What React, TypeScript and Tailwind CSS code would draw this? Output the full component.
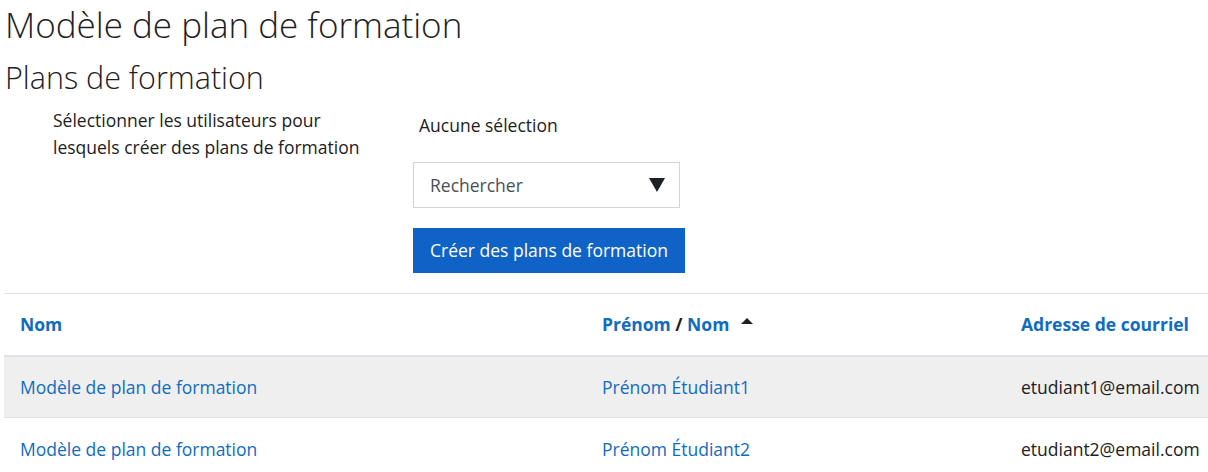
import React from 'react'

const rows = [
  { plan: 'Modèle de plan de formation', user: 'Prénom Étudiant1', email: 'etudiant1@email.com' },
  { plan: 'Modèle de plan de formation', user: 'Prénom Étudiant2', email: 'etudiant2@email.com' },
]

export default function App() {
  return (
    <div className="w-[1208px] h-[472px] overflow-hidden bg-white text-[#1d2125] font-['Open_Sans',sans-serif]">
      <h1 className="pl-[5px] text-[35px] leading-[50px] font-light">Modèle de plan de formation</h1>
      <h2 className="pl-[5px] mt-[7px] text-[30.5px] leading-[40px] font-light">Plans de formation</h2>

      <div className="flex mt-[10px]">
        <div className="w-[413px] pl-[53px]">
          <div className="w-[320px] text-[17.5px] leading-[27px]">
            Sélectionner les utilisateurs pour lesquels créer des plans de formation
          </div>
        </div>
        <div className="flex flex-col">
          <div className="pl-[6px] pt-[5px] text-[17.5px] leading-[27px]">Aucune sélection</div>
          <div className="mt-[23px] flex items-center justify-between w-[267px] h-[46px] border border-[#ced4da] pl-[16px] pr-[14px] text-[17.5px] text-[#495057]">
            <span>Rechercher</span>
            <span className="w-0 h-0 border-l-[8px] border-r-[8px] border-t-[14px] border-l-transparent border-r-transparent border-t-[#1d2125]" />
          </div>
          <button className="mt-[20px] w-[272px] h-[45px] bg-[#0f63c6] text-white text-[17.5px] text-left pl-[17px]">
            Créer des plans de formation
          </button>
        </div>
      </div>

      <table className="ml-[4px] mt-[20px] w-[1204px] border-t border-[#dee2e6] text-[17.5px] table-fixed">
        <thead>
          <tr className="border-b-2 border-[#dee2e6] h-[62px]">
            <th className="w-[598px] pl-[16px] text-left font-bold text-[#0f6cbf]">Nom</th>
            <th className="w-[419px] text-left font-bold text-[#0f6cbf]">
              Prénom <span className="text-[#1d2125]">/</span> Nom
              <span className="inline-block ml-[12px] align-[7px] w-0 h-0 border-l-[6px] border-r-[6px] border-b-[6px] border-l-transparent border-r-transparent border-b-[#1d2125]" />
            </th>
            <th className="text-left font-bold text-[#0f6cbf]">Adresse de courriel</th>
          </tr>
        </thead>
        <tbody>
          {rows.map((r, i) => (
            <tr key={i} className={i === 0 ? 'bg-[#efefef] border-b border-[#dee2e6] h-[62px]' : 'h-[62px]'}>
              <td className="pl-[16px] text-[#0f6cbf]">{r.plan}</td>
              <td className="text-[#0f6cbf]">{r.user}</td>
              <td className="whitespace-nowrap">{r.email}</td>
            </tr>
          ))}
        </tbody>
      </table>
    </div>
  )
}
